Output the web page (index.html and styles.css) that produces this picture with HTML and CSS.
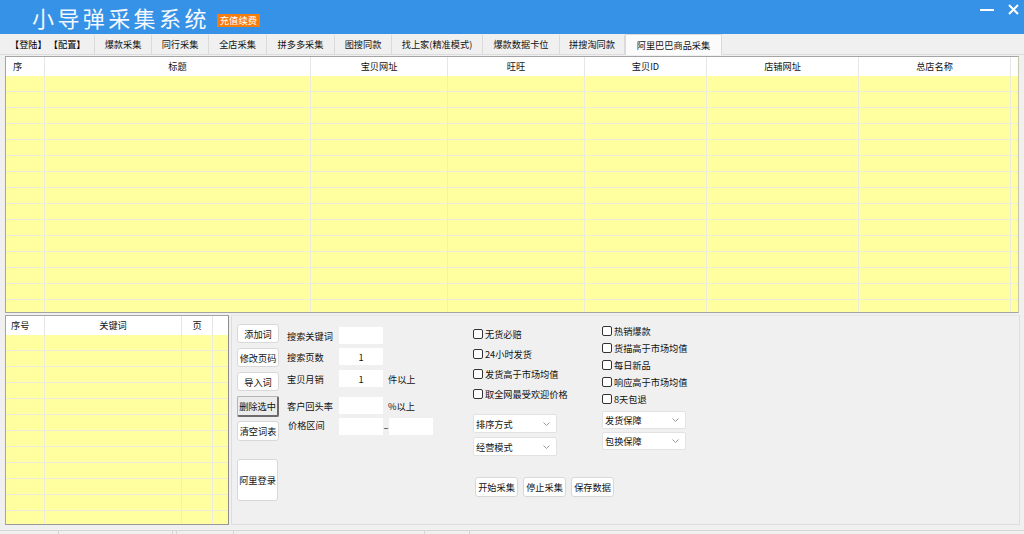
FILE: index.html
```html
<!DOCTYPE html>
<html lang="zh-CN">
<head>
<meta charset="utf-8">
<title>小导弹采集系统</title>
<link rel="stylesheet" href="styles.css">
</head>
<body>
<div class="app">
  <div class="titlebar">
    <div class="title">小导弹采集系统</div>
    <span class="badge">充值续费</span>
    <div class="winctl">
      <svg class="ic-min" width="14" height="12" viewBox="0 0 14 12"><line x1="0" y1="6" x2="14" y2="6" stroke="#fff" stroke-width="2"/></svg>
      <svg class="ic-close" width="11" height="11" viewBox="0 0 11 11"><path d="M1 1L10 10M10 1L1 10" stroke="#fff" stroke-width="2"/></svg>
    </div>
  </div>

  <div class="tabs">
    <div class="tab t-login">【登陆】 【配置】</div>
    <div class="tab w57">爆款采集</div>
    <div class="tab w57">同行采集</div>
    <div class="tab w58">全店采集</div>
    <div class="tab w68">拼多多采集</div>
    <div class="tab w57">图搜同款</div>
    <div class="tab w91">找上家(精准模式)</div>
    <div class="tab w77">爆款数据卡位</div>
    <div class="tab w65">拼搜淘同款</div>
    <div class="tab active">阿里巴巴商品采集</div>
  </div>

  <div class="grid-top">
    <div class="ghead">
      <div class="c first">序</div>
      <div class="c">标题</div>
      <div class="c">宝贝网址</div>
      <div class="c">旺旺</div>
      <div class="c">宝贝ID</div>
      <div class="c">店铺网址</div>
      <div class="c">总店名称</div>
      <div class="c"></div>
    </div>
    <div class="gbody">
      <div class="col first"></div>
      <div class="col"></div>
      <div class="col"></div>
      <div class="col"></div>
      <div class="col"></div>
      <div class="col"></div>
      <div class="col"></div>
      <div class="col"></div>
    </div>
  </div>

  <div class="lower">
    <div class="kw">
      <div class="kwhead">
        <div class="c first">序号</div>
        <div class="c">关键词</div>
        <div class="c">页</div>
        <div class="c"></div>
      </div>
      <div class="kwbody">
        <div class="col first"></div>
        <div class="col"></div>
        <div class="col"></div>
        <div class="col"></div>
      </div>
    </div>

    <div class="panel">
      <div class="colA">
        <button class="btn">添加词</button>
        <button class="btn">修改页码</button>
        <button class="btn">导入词</button>
        <button class="btn pressed">删除选中</button>
        <button class="btn b5">清空词表</button>
        <button class="btn big">阿里登录</button>
      </div>

      <div class="colB">
        <div class="frow r1"><span class="lbl">搜索关键词</span><input class="inp" type="text" value=""></div>
        <div class="frow r2"><span class="lbl">搜索页数</span><input class="inp" type="text" value="1"></div>
        <div class="frow r3"><span class="lbl">宝贝月销</span><input class="inp" type="text" value="1"><span class="suf">件以上</span></div>
        <div class="frow r4"><span class="lbl">客户回头率</span><input class="inp" type="text" value=""><span class="suf">%以上</span></div>
        <div class="frow r5"><span class="lbl lbl-price">价格区间</span><input class="inp" type="text" value=""><span class="dash">–</span><input class="inp" type="text" value=""></div>
      </div>

      <div class="colC">
        <div class="chk c20"><span class="box"></span>无货必赔</div>
        <div class="chk c20"><span class="box"></span>24小时发货</div>
        <div class="chk c20"><span class="box"></span>发货高于市场均值</div>
        <div class="chk c20"><span class="box"></span>取全网最受欢迎价格</div>
        <div class="sel s1"><span>排序方式</span><svg width="7" height="4" viewBox="0 0 7 4"><polyline points="0.5,0.5 3.5,3.5 6.5,0.5" fill="none" stroke="#999" stroke-width="1"/></svg></div>
        <div class="sel s2"><span>经营模式</span><svg width="7" height="4" viewBox="0 0 7 4"><polyline points="0.5,0.5 3.5,3.5 6.5,0.5" fill="none" stroke="#999" stroke-width="1"/></svg></div>
        <div class="actions">
          <button class="btn">开始采集</button>
          <button class="btn">停止采集</button>
          <button class="btn">保存数据</button>
        </div>
      </div>

      <div class="colD">
        <div class="chk c17"><span class="box"></span>热销爆款</div>
        <div class="chk c17"><span class="box"></span>货描高于市场均值</div>
        <div class="chk c17"><span class="box"></span>每日新品</div>
        <div class="chk c17"><span class="box"></span>响应高于市场均值</div>
        <div class="chk c17"><span class="box"></span>8天包退</div>
        <div class="sel d1"><span>发货保障</span><svg width="7" height="4" viewBox="0 0 7 4"><polyline points="0.5,0.5 3.5,3.5 6.5,0.5" fill="none" stroke="#999" stroke-width="1"/></svg></div>
        <div class="sel d2"><span>包换保障</span><svg width="7" height="4" viewBox="0 0 7 4"><polyline points="0.5,0.5 3.5,3.5 6.5,0.5" fill="none" stroke="#999" stroke-width="1"/></svg></div>
      </div>
    </div>
  </div>

  <div class="status">
    <div class="seg sg1"></div>
    <div class="seg sg2"></div>
    <div class="seg sg3"></div>
    <div class="seg sg4"></div>
    <div class="seg sg5"></div>
    <div class="seg sg6"></div>
    <div class="seg sg7"></div>
  </div>
</div>
</body>
</html>
```

FILE: styles.css
```css
* { box-sizing: border-box; }
html, body { margin: 0; padding: 0; }
body {
  background: #f0f0f0;
  font-family: "Noto Sans CJK SC", "Microsoft YaHei", sans-serif;
  font-size: 9.2px;
  color: #111;
}
.app { width: 1024px; height: 534px; overflow: hidden; }

/* title bar */
.titlebar {
  height: 34px;
  background: #3592e7;
  display: flex;
  align-items: flex-start;
}
.title {
  margin: 6px 0 0 32px;
  color: #f4f8fc;
  font-size: 22px;
  line-height: 22px;
  letter-spacing: 3.4px;
  font-weight: 400;
}
.badge {
  margin: 14px 0 0 7px;
  height: 13px;
  padding: 0 3px;
  background: #f57d0e;
  color: #fff;
  font-size: 9.3px;
  line-height: 13px;
}
.winctl {
  margin: 4px 5px 0 auto;
  display: flex;
  align-items: flex-start;
  gap: 14px;
}

/* tabs */
.tabs {
  height: 21px;
  display: flex;
  align-items: flex-end;
  padding-left: 5px;
  border-bottom: 1px solid #dcdcdc;
}
.tab {
  height: 19px;
  line-height: 18px;
  text-align: center;
  border-right: 1px solid #dadada;
  background: #f0f0f0;
  white-space: nowrap;
}
.t-login { width: 90px; text-align: left; padding-left: 5px; color: #000; }
.w57 { width: 57px; }
.w58 { width: 58px; }
.w65 { width: 65px; }
.w68 { width: 68px; }
.w77 { width: 77px; }
.w91 { width: 91px; }
.tab.active {
  width: 97px;
  height: 21px;
  line-height: 20px;
  background: #fbfbfb;
  border: 1px solid #dadada;
  border-bottom: none;
  margin-bottom: -1px;
}

/* top grid */
.grid-top {
  margin: 1px 0 0 5px;
  width: 1014px;
  height: 257px;
  border: 1px solid #a4a4a4;
  border-right-color: #c9c9b0;
  background: #fff;
}
.ghead, .gbody {
  display: grid;
  grid-template-columns: 38px 266px 137px 137px 122px 152px 152px 8px;
}
.ghead { height: 19px; background: #fff; }
.ghead .c, .kwhead .c {
  border-left: 1px solid #e6e6e6;
  text-align: center;
  line-height: 19px;
  white-space: nowrap;
}
.ghead .c.first { border-left: none; text-align: left; padding-left: 7px; }
.gbody, .kwbody {
  background: repeating-linear-gradient(to bottom, #ffffa0 0, #ffffa0 15px, #ececdc 15px, #ececdc 16px);
}
.gbody { height: 236px; }
.gbody .col, .kwbody .col { border-left: 1px solid #ececdc; }
.gbody .col.first, .kwbody .col.first { border-left: none; }

/* lower area */
.lower {
  display: flex;
  gap: 2px;
  margin-top: 2px;
  height: 210px;
  padding-left: 5px;
}
.kw {
  width: 224px;
  height: 210px;
  border: 1px solid #a4a4a4;
  border-right-color: #8c8c8c;
  border-bottom-color: #9a9a9a;
  background: #fff;
}
.kwhead, .kwbody {
  display: grid;
  grid-template-columns: 38px 137px 31px 16px;
}
.kwhead { height: 19px; }
.kwhead .c.first { border-left: none; text-align: left; padding-left: 5px; }
.kwbody { height: 189px; }

.panel {
  width: 789px;
  height: 210px;
  border: 1px solid #dedede;
  border-top-color: #e6e6e6;
  display: flex;
  padding-left: 5px;
}

/* buttons */
.btn {
  flex: none;
  width: 42px;
  height: 19px;
  padding: 0;
  background: #fff;
  border: 1px solid #d8d8d8;
  border-radius: 3px;
  font-family: inherit;
  font-size: 9.2px;
  color: #111;
  display: flex;
  align-items: center;
  justify-content: center;
  white-space: nowrap;
}
.colA {
  width: 42px;
  padding-top: 8px;
  display: flex;
  flex-direction: column;
}
.colA .btn { margin-top: 5px; }
.colA .btn:first-child { margin-top: 0; }
.colA .btn.pressed {
  height: 21px;
  background: #ececec;
  border: 1px solid #b5b5b5;
  border-right: 2px solid #6c6c6c;
  border-bottom: 2px solid #6c6c6c;
  border-radius: 2px;
}
.colA .btn.b5 { margin-top: 4px; height: 20px; }
.colA .btn.big { margin-top: 18px; width: 41px; height: 42px; }

/* fields */
.colB {
  width: 186px;
  margin-left: 8px;
  padding-top: 11px;
  display: flex;
  flex-direction: column;
}
.frow { display: flex; align-items: center; height: 17px; white-space: nowrap; }
.r2 { margin-top: 4px; }
.r3 { margin-top: 5px; }
.r4 { margin-top: 10px; }
.r5 { margin-top: 4px; }
.lbl { width: 52px; flex: none; }
.lbl-price { padding-left: 1px; position: relative; top: -2px; }
.inp {
  flex: none;
  width: 44px;
  height: 17px;
  border: none;
  background: #fff;
  padding: 0;
  font-family: inherit;
  font-size: 9.2px;
  color: #111;
  text-align: center;
  outline: none;
}
.suf { margin-left: 5px; }
.dash { width: 6px; text-align: center; }

/* checks */
.colC {
  width: 128px;
  flex: none;
  padding-top: 8px;
  display: flex;
  flex-direction: column;
}
.colD {
  width: 130px;
  flex: none;
  padding-top: 6px;
  padding-left: 1px;
  display: flex;
  flex-direction: column;
}
.chk { display: flex; align-items: center; white-space: nowrap; }
.c20 { height: 20px; }
.c17 { height: 17px; }
.box {
  width: 10px;
  height: 10px;
  border: 1px solid #333;
  border-radius: 2px;
  background: #fff;
  margin-right: 2px;
  flex: none;
}

.sel {
  width: 84px;
  height: 19px;
  background: #fff;
  border: 1px solid #e2e2e2;
  border-radius: 2px;
  display: flex;
  align-items: center;
  justify-content: space-between;
  padding: 0 6px 0 2px;
  white-space: nowrap;
}
.s1 { margin-top: 10px; }
.s2 { margin-top: 4px; }
.d1 { margin-top: 4px; height: 18px; }
.d2 { margin-top: 3px; height: 18px; }

.actions {
  display: flex;
  gap: 5px;
  margin-top: 21px;
  margin-left: 2px;
}
.actions .btn { width: 43px; height: 20px; }

/* status */
.status {
  margin-top: 5px;
  height: 4px;
  border-top: 1px solid #d6d6d6;
  display: flex;
}
.seg { height: 3px; border-left: 1px solid #d6d6d6; }
.sg1 { width: 58px; border-left: none; }
.sg2 { width: 114px; }
.sg3 { width: 4px; }
.sg4 { width: 57px; }
.sg5 { width: 191px; }
.sg6 { width: 45px; }
.sg7 { flex: 1; }
```
